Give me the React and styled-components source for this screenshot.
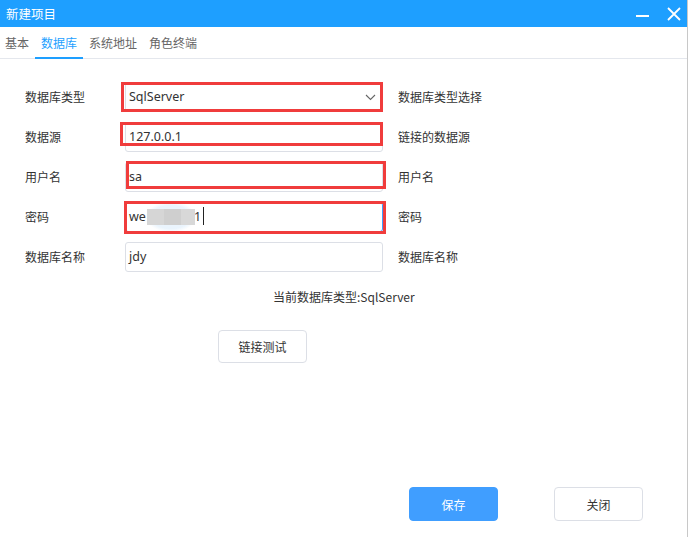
import styled, { createGlobalStyle } from "styled-components";

const GlobalStyle = createGlobalStyle`
  html, body {
    margin: 0;
    padding: 0;
    background: #fff;
  }
  body {
    font-family: "Noto Sans", "Noto Sans CJK SC", sans-serif;
    color: #333;
  }
`;

const Window = styled.div`
  width: 687px;
  height: 537px;
  border-right: 1px solid #c8c8c8;
  display: flex;
  flex-direction: column;
  background: #fff;
`;

const TitleBar = styled.div`
  height: 27px;
  background: #1e9fff;
  display: flex;
  align-items: center;
  padding: 0 6px 0 6px;
  color: #fff;
  font-family: "Noto Sans CJK SC", sans-serif;
  font-size: 12.5px;
`;

const Title = styled.div`
  flex: 1;
  margin-top: -1px;
`;

const TitleIcons = styled.div`
  display: flex;
  align-items: center;
  gap: 17px;
`;

const Tabs = styled.div`
  height: 31px;
  display: flex;
  align-items: stretch;
  border-bottom: 1px solid #e4e7ed;
  padding-left: 5px;
  gap: 12px;
`;

const Tab = styled.div`
  display: flex;
  align-items: center;
  font-family: "Noto Sans CJK SC", sans-serif;
  font-size: 12px;
  color: ${({ $active }) => ($active ? "#1e9fff" : "#666")};
  border-bottom: 2px solid ${({ $active }) => ($active ? "#1e9fff" : "transparent")};
  margin-bottom: -1px;
  padding: 0 ${({ $active }) => ($active ? "6px" : "0")};
  margin-left: ${({ $active }) => ($active ? "-6px" : "0")};
  margin-right: ${({ $active }) => ($active ? "-6px" : "0")};
`;

const Body = styled.div`
  flex: 1;
  display: flex;
  flex-direction: column;
  padding: 23px 0 0 25px;
`;

const Form = styled.div`
  display: flex;
  flex-direction: column;
  gap: 10px;
`;

const Row = styled.div`
  display: flex;
  align-items: center;
  height: 30px;
`;

const Label = styled.div`
  width: 100px;
  font-family: "Noto Sans CJK SC", sans-serif;
  font-size: 12px;
  color: #333;
  margin-top: -2px;
`;

const Field = styled.div`
  position: relative;
  width: 258px;
  height: 30px;
  box-sizing: border-box;
  border: 1px solid ${({ $focus }) => ($focus ? "#409eff" : "#dcdfe6")};
  border-radius: 3px;
  display: flex;
  align-items: center;
  padding: 0 6px 0 3px;
  font-size: 12.5px;
  color: #333;
  font-family: "Noto Sans", "Noto Sans CJK SC", sans-serif;
`;

const FieldText = styled.span`
  flex: 1;
  display: flex;
  align-items: center;
  white-space: nowrap;
  margin-top: -2px;
`;

const Blur = styled.span`
  display: inline-flex;
  align-items: center;
  justify-content: center;
  width: 50px;
  height: 30px;
  margin-top: 2px;
  background: radial-gradient(ellipse at center, #eaf4fd 55%, rgba(255, 255, 255, 0) 72%);
`;

const BlurBlock = styled.span`
  display: inline-block;
  height: 16px;
  width: ${({ $w }) => $w}px;
  background: ${({ $c }) => $c};
  filter: blur(0.6px);
`;

const Caret = styled.span`
  display: inline-block;
  width: 1px;
  height: 18px;
  background: #222;
  margin-left: 2px;
`;

const Mark = styled.div`
  position: absolute;
  pointer-events: none;
  border: 3px solid #f03c3c;
  box-sizing: border-box;
  top: ${({ $t }) => $t}px;
  bottom: ${({ $b }) => $b}px;
  left: ${({ $l }) => $l}px;
  right: ${({ $r }) => $r}px;
`;

const Hint = styled.div`
  margin: -2px 0 0 15px;
  font-family: "Noto Sans CJK SC", sans-serif;
  font-size: 12px;
  color: #333;
`;

const Current = styled.div`
  margin: 17px 0 0 248px;
  font-family: "Noto Sans CJK SC", sans-serif;
  font-size: 12px;
  color: #333;
  line-height: 16px;
`;

const Button = styled.button`
  width: ${({ $w }) => $w || 89}px;
  height: ${({ $h }) => $h || 34}px;
  border-radius: 4px;
  border: 1px solid ${({ $primary }) => ($primary ? "#409eff" : "#dcdfe6")};
  background: ${({ $primary }) => ($primary ? "#409eff" : "#fff")};
  color: ${({ $primary }) => ($primary ? "#fff" : "#333")};
  font-family: "Noto Sans CJK SC", sans-serif;
  font-size: 12px;
  padding: 0;
  cursor: pointer;
`;

const TestWrap = styled.div`
  margin: 25px 0 0 193px;
`;

const Footer = styled.div`
  display: flex;
  gap: 56px;
  margin: 124px 0 0 384px;
`;

function Chevron() {
  return (
    <svg width="11" height="7" viewBox="0 0 11 7">
      <polyline points="1,1 5.5,5.5 10,1" fill="none" stroke="#666" strokeWidth="1.1" />
    </svg>
  );
}

const rows = [
  { label: "数据库类型", value: "SqlServer", hint: "数据库类型选择", select: true, mark: { t: -1, b: -1, l: -5, r: -1 } },
  { label: "数据源", value: "127.0.0.1", hint: "链接的数据源", mark: { t: -1, b: 5, l: -6, r: -1 } },
  { label: "用户名", value: "sa", hint: "用户名", mark: { t: -2, b: 2, l: 0, r: -4 } },
  { label: "密码", hint: "密码", password: true, focus: true, mark: { t: -2, b: -3, l: -2, r: -4 } },
  { label: "数据库名称", value: "jdy", hint: "数据库名称" },
];

export default function App() {
  return (
    <>
      <GlobalStyle />
      <Window>
        <TitleBar>
          <Title>新建项目</Title>
          <TitleIcons>
            <svg width="14" height="14" viewBox="0 0 14 14">
              <rect x="0" y="8" width="13" height="2" fill="#fff" />
            </svg>
            <svg width="14" height="14" viewBox="0 0 14 14">
              <path d="M1 1 L13 13 M13 1 L1 13" stroke="#fff" strokeWidth="1.8" />
            </svg>
          </TitleIcons>
        </TitleBar>
        <Tabs>
          <Tab>基本</Tab>
          <Tab $active>数据库</Tab>
          <Tab>系统地址</Tab>
          <Tab>角色终端</Tab>
        </Tabs>
        <Body>
          <Form>
            {rows.map((r) => (
              <Row key={r.label}>
                <Label>{r.label}</Label>
                <Field $focus={r.focus}>
                  <FieldText>
                    {r.password ? (
                      <>
                        we
                        <Blur>
                          <BlurBlock $w={17} $c="#d6d6d6" />
                          <BlurBlock $w={17} $c="#cfcfcf" />
                          <BlurBlock $w={14} $c="#d8d8d8" />
                        </Blur>
                        <span style={{ marginLeft: -2 }}>1</span>
                        <Caret />
                      </>
                    ) : (
                      r.value
                    )}
                  </FieldText>
                  {r.select && <Chevron />}
                  {r.mark && <Mark $t={r.mark.t} $b={r.mark.b} $l={r.mark.l} $r={r.mark.r} />}
                </Field>
                <Hint>{r.hint}</Hint>
              </Row>
            ))}
          </Form>
          <Current>当前数据库类型:SqlServer</Current>
          <TestWrap>
            <Button $w={89} $h={33}>链接测试</Button>
          </TestWrap>
          <Footer>
            <Button $primary>保存</Button>
            <Button>关闭</Button>
          </Footer>
        </Body>
      </Window>
    </>
  );
}
